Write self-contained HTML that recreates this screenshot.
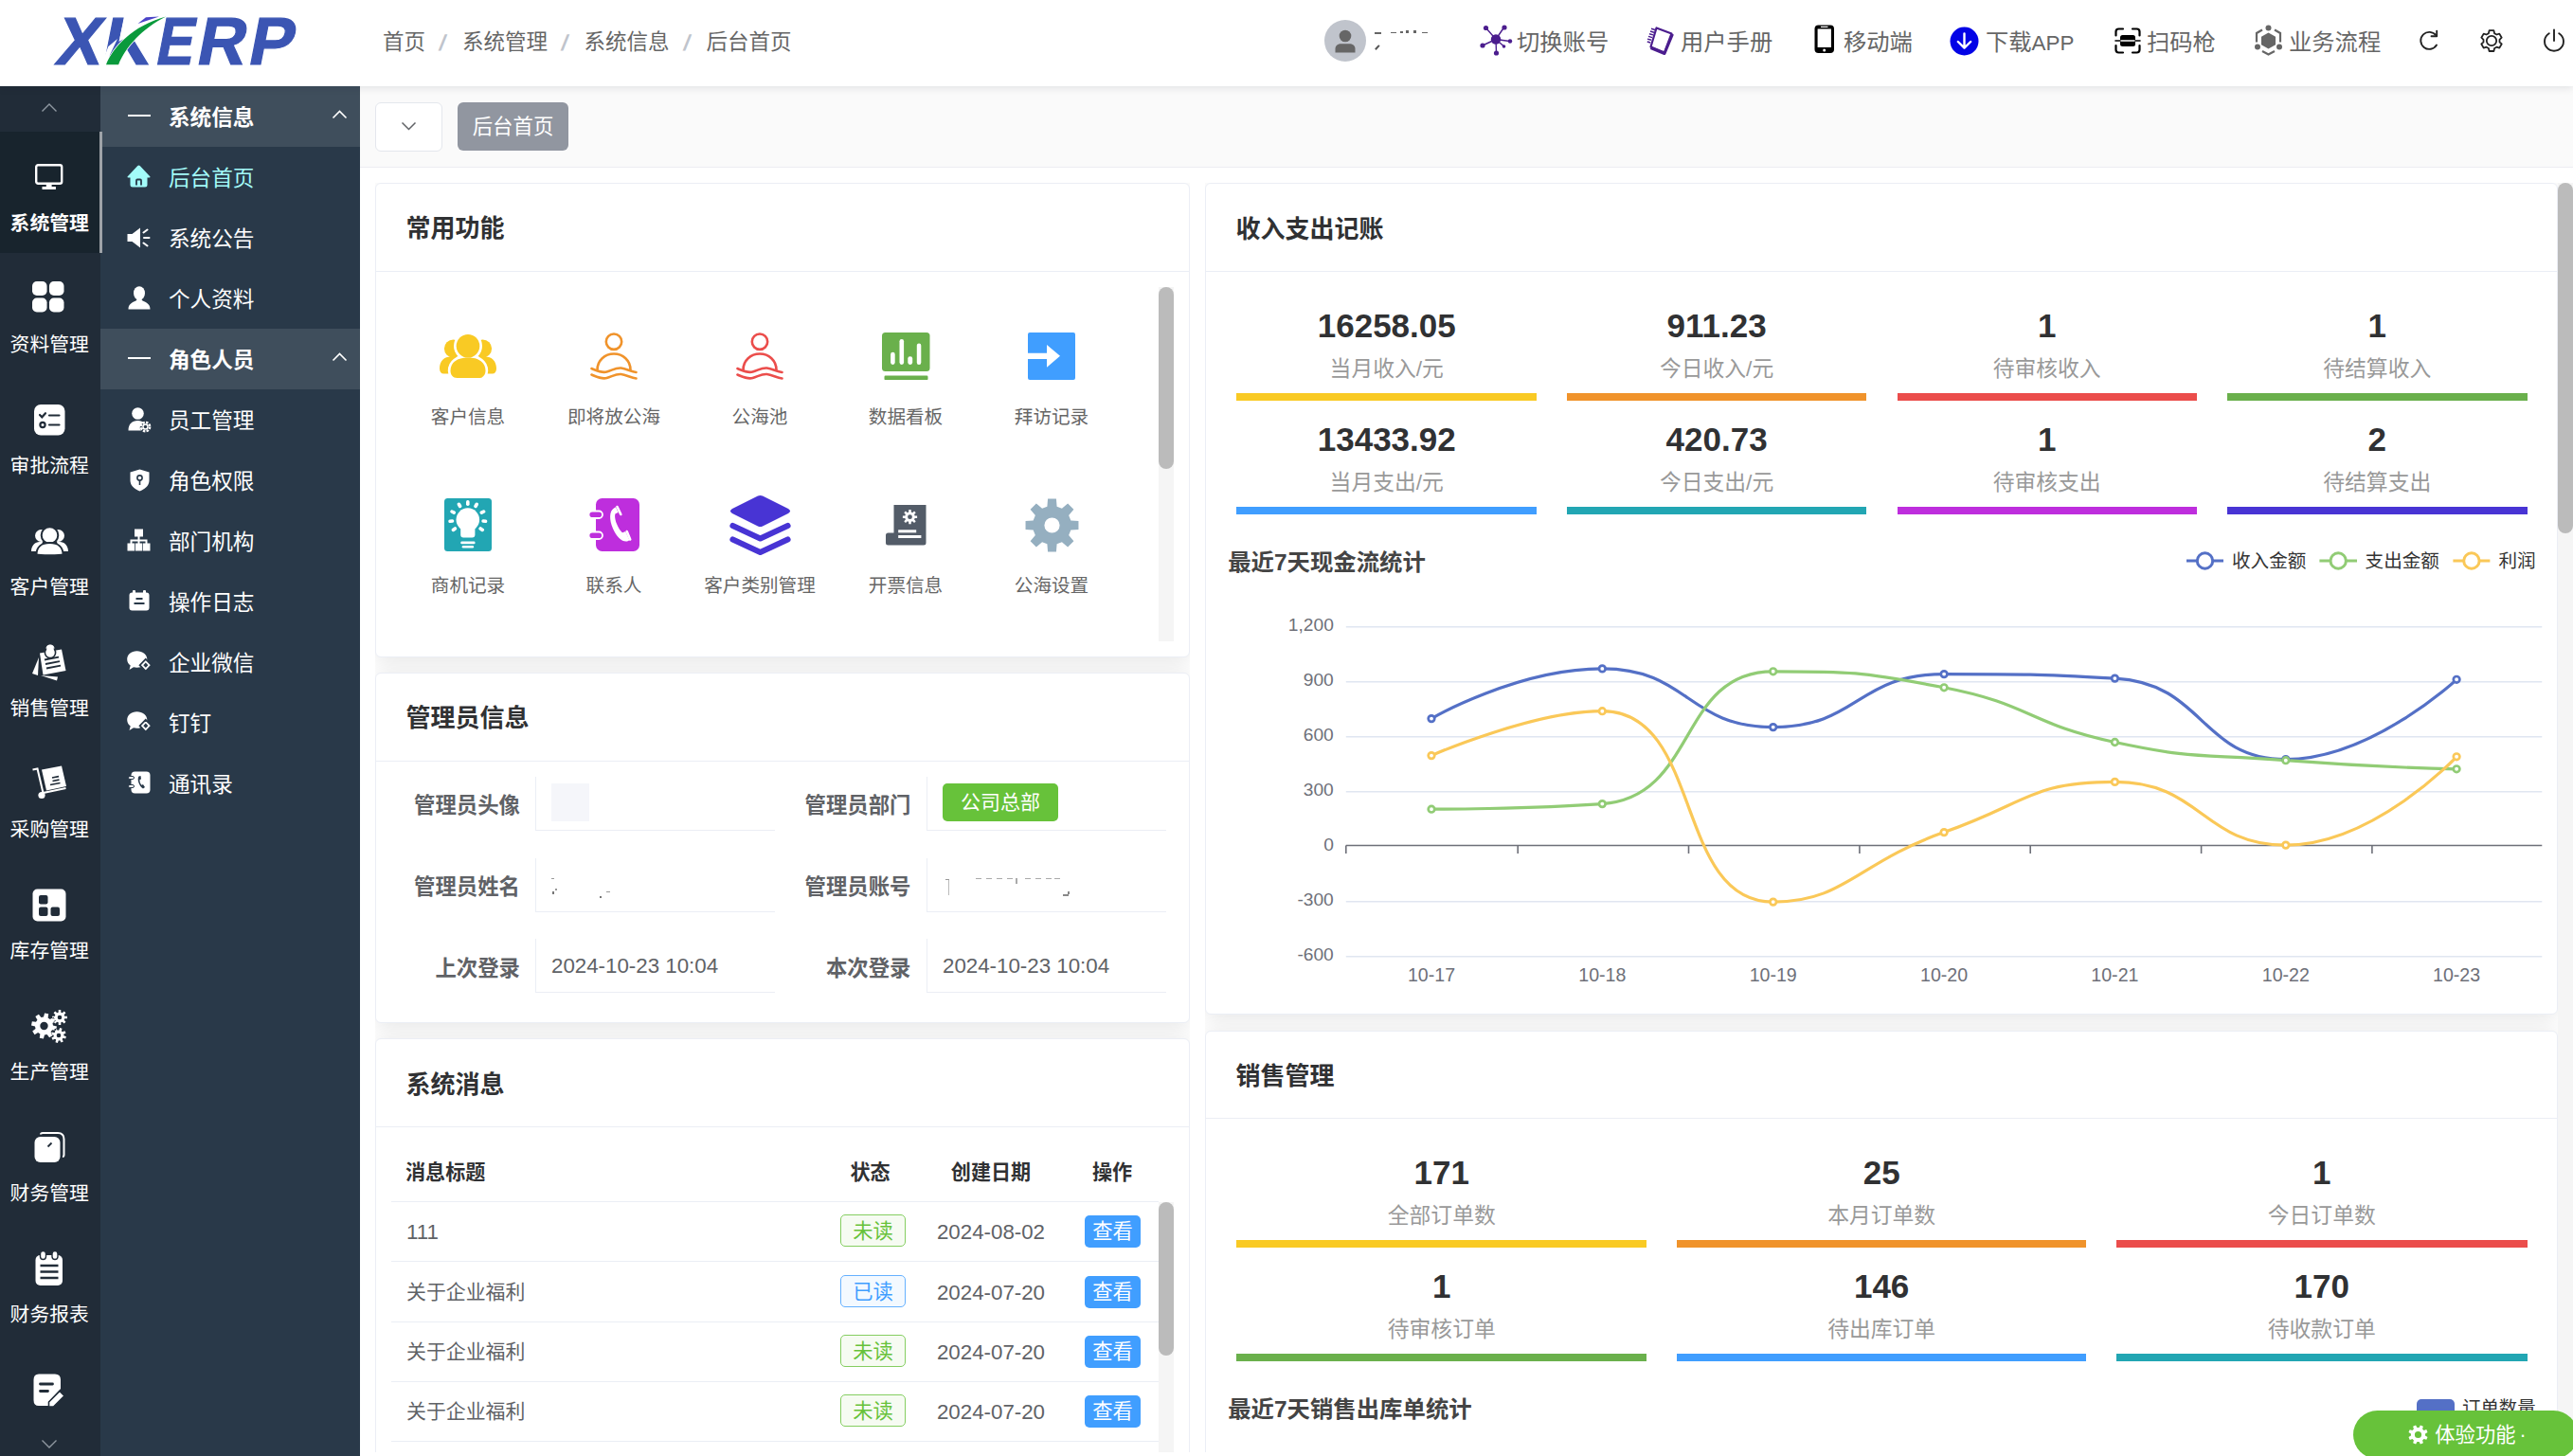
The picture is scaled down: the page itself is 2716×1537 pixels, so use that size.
<!DOCTYPE html>
<html lang="zh-CN">
<head>
<meta charset="utf-8">
<title>XKERP 后台首页</title>
<style>
*{box-sizing:border-box;margin:0;padding:0}
html,body{width:2716px;height:1537px;overflow:hidden;background:#fff}
body{font-family:"Liberation Sans","Noto Sans CJK SC",sans-serif;color:#333;position:relative}
.abs{position:absolute}
svg{display:block}
/* header */
#hd{position:absolute;left:0;top:0;width:2716px;height:91px;background:#fff;box-shadow:0 2px 8px rgba(0,21,41,.10);z-index:5}
.bc{position:absolute;top:0;height:91px;line-height:90px;font-size:22.5px;color:#666;white-space:nowrap}
.bc.sep{color:#c0c4cc;font-size:23px;font-weight:bold}
.hi{position:absolute;top:0;height:91px;line-height:89.4px;font-size:24.3px;color:#666;white-space:nowrap}
/* sidebars */
#s1{position:absolute;left:0;top:91px;width:106px;height:1446px;background:#212c38;z-index:2}
#s2{position:absolute;left:106px;top:91px;width:274px;height:1446px;background:#293949;z-index:1}
.s1i{position:absolute;left:0;width:106px;height:128px;color:#fff;text-align:center}
.s1i .lb{position:absolute;left:-10.8px;width:126px;text-align:center;top:80px;font-size:20.8px;line-height:34px;white-space:nowrap;color:#fff}
.s1i svg{position:absolute}
.s2h{position:absolute;left:0;width:274px;height:64px;background:#3f4e5c;color:#fff;font-weight:bold;font-size:22.6px;line-height:68.6px}
.s2i{position:absolute;left:0;width:274px;height:64px;color:#fff;font-size:22.6px;line-height:68.6px}
.s2h span,.s2i span{position:absolute;left:72px;top:0;white-space:nowrap}
.s2i svg,.s2h svg{position:absolute}
/* main */
#tabs{position:absolute;left:380px;top:91px;width:2336px;height:86px;background:#fafafa;border-bottom:1px solid #ececf2}
.card{position:absolute;background:#fff;border:1px solid #ebeef5;border-radius:6px;box-shadow:0 3.8px 22.8px rgba(0,0,0,.1)}
.ct{position:absolute;left:31.5px;font-weight:bold;font-size:26px;color:#303133;white-space:nowrap;line-height:40px}
.chl{position:absolute;left:0;right:0;height:1px;background:#ebeef5}

.fl{width:180px;text-align:center;font-size:19.6px;color:#666;line-height:30px;white-space:nowrap}
.al{text-align:right;font-weight:bold;font-size:22.4px;color:#606266;line-height:40px;white-space:nowrap}
.vb{height:57px;border-left:1px solid #ebeef5;border-bottom:1px solid #ebeef5}
.av{font-size:22.3px;color:#606266;line-height:40px;white-space:nowrap}
.th{font-weight:bold;font-size:21.1px;color:#303133;line-height:41.4px;white-space:nowrap}
.td{font-size:22.3px;color:#606266;line-height:41.4px;white-space:nowrap}
.tdc{font-size:20.9px;color:#606266;line-height:40px;white-space:nowrap}
.tag{width:69px;height:34px;border-radius:5px;font-size:21.3px;line-height:35.8px;text-align:center;border:1px solid}
.tg{background:#f6fbf2;border-color:#85ce61;color:#67c23a}
.tb{background:#f3f9ff;border-color:#66b1ff;color:#409eff}
.btn{width:59px;height:34px;border-radius:5px;background:#409eff;color:#fff;font-size:21.3px;line-height:35.4px;text-align:center}

.num{text-align:center;font-weight:bold;font-size:35px;color:#303133;line-height:50px;white-space:nowrap}
.nlb{text-align:center;font-size:22.8px;color:#999;line-height:40px;white-space:nowrap}
.cht{font-weight:bold;font-size:24.4px;color:#444;line-height:40px;white-space:nowrap}
</style>
</head>
<body>
<div id="hd">
<svg class="abs" style="left:50px;top:10px" width="280" height="70" viewBox="0 0 280 70">
<g font-family="Liberation Sans,sans-serif" font-weight="bold" font-size="71" fill="#3b55b3" stroke="#3b55b3" stroke-width="1.2"><text transform="translate(0,58.2) skewX(-11)" y="0"><tspan x="7">X</tspan><tspan x="55.5">K</tspan><tspan x="112.5" textLength="39.5" lengthAdjust="spacingAndGlyphs">E</tspan><tspan x="155.5">R</tspan><tspan x="210">P</tspan></text></g>
<path d="M56 61 L64.2 39.3 L74 31 L66 48 L63 61 Z" fill="#fff"/>
<path d="M82.2 5 L122 5 L122 8.600 L75.500 34 L77 27 Z" fill="#fff"/>
<path d="M95.5 15 L104 8.2 L118 7.6 Z" fill="#4b44c8"/>
<path d="M62 58.2 C69 40 90 17 125.1 7.4 C100 20 82 40 75.1 58.2 Z" fill="#0a9a3c" stroke="#fff" stroke-width="1.5"/>
<path d="M62 58.2 C69 40 90 17 125.1 7.4 C100 20 82 40 75.1 58.2 Z" fill="#0a9a3c"/>
</svg>
<div class="bc" style="left:404px">首页</div>
<div class="bc" style="left:488px">系统管理</div>
<div class="bc" style="left:616.5px">系统信息</div>
<div class="bc" style="left:745.5px">后台首页</div>
<div class="bc sep" style="left:463.5px;transform:skewX(-12deg)">/</div>
<div class="bc sep" style="left:592.5px;transform:skewX(-12deg)">/</div>
<div class="bc sep" style="left:721.5px;transform:skewX(-12deg)">/</div>
<div class="abs" style="left:1398px;top:21px;width:44px;height:44px;border-radius:50%;background:#c0c4cc"></div>
<svg class="abs" style="left:1408px;top:30px" width="24" height="26" viewBox="0 0 24 26"><circle cx="12" cy="8" r="6.3" fill="#666"/><path d="M1.5 25.5v-4c0-3.5 3-5.3 6-5.3h9c3 0 6 1.8 6 5.3v4z" fill="#666"/></svg>
<div class="abs" style="left:1451px;top:34px;width:7px;height:1.7px;background:#666"></div><div class="abs" style="left:1468px;top:34px;width:6px;height:1.2px;background:#666"></div><div class="abs" style="left:1478px;top:33px;width:2.5px;height:2px;background:#666"></div><div class="abs" style="left:1484px;top:32px;width:3px;height:3px;background:#666"></div><div class="abs" style="left:1492px;top:32px;width:3px;height:3px;background:#666"></div><div class="abs" style="left:1500.5px;top:34px;width:6.5px;height:1px;background:#666"></div><div class="abs" style="left:1451px;top:49px;width:6px;height:2.4px;background:#555;transform:rotate(-48deg);transform-origin:center"></div>
<svg class="abs" style="left:1562px;top:26px" width="35" height="33" viewBox="0 0 35 33" fill="#4b1d8e" stroke="#4b1d8e" stroke-width="1.4" stroke-linecap="round">
<circle cx="17" cy="15.5" r="5.2" stroke="none"/>
<path d="M17 15.5L7 4M17 15.5L25.5 3M17 15.5L31.5 17.5M17 15.5L3 22M17 15.5L17.5 30M17 15.5L25 22.5"/>
<circle cx="6.5" cy="3.5" r="2.6" stroke="none"/><circle cx="26" cy="3" r="2.6" stroke="none"/><circle cx="32" cy="17.5" r="2.2" stroke="none"/><circle cx="3" cy="22" r="2.6" stroke="none"/><circle cx="17.5" cy="30" r="2.6" stroke="none"/><circle cx="25.5" cy="23" r="1.8" stroke="none"/>
</svg>
<div class="hi" style="left:1601px">切换账号</div>
<svg class="abs" style="left:1738px;top:26px" width="30" height="33" viewBox="0 0 30 33">
<path d="M10.5 3.5L26.5 9.5L19 29.5L4.5 23.5Z" fill="#fff" stroke="#4b1d8e" stroke-width="2.2" stroke-linejoin="round"/>
<path d="M4.5 24.5L19 30.5L27.5 10" fill="none" stroke="#4b1d8e" stroke-width="3" stroke-linejoin="round"/>
<path d="M9 5.5l-4 -1.2M8 8.2l-4 -1.2M7 10.9l-4 -1.2M6 13.6l-4 -1.2M5 16.3l-4 -1.2M4.2 19l-3.4 -1" stroke="#4b1d8e" stroke-width="1.5"/>
</svg>
<div class="hi" style="left:1774px">用户手册</div>
<svg class="abs" style="left:1915px;top:26px" width="22" height="31" viewBox="0 0 22 31"><rect x="0.5" y="0.5" width="20.5" height="29.5" rx="4" fill="#000"/><rect x="3.6" y="4.5" width="14.3" height="19.5" fill="#fff"/><circle cx="10.7" cy="27" r="1.5" fill="#fff"/><rect x="7" y="1.8" width="7.5" height="1.2" fill="#fff"/></svg>
<div class="hi" style="left:1946px">移动端</div>
<svg class="abs" style="left:2058px;top:28px" width="31" height="31" viewBox="0 0 31 31"><circle cx="15.5" cy="15.5" r="15" fill="#0303e6"/><path d="M15.5 7.5v15M8.8 16l6.7 6.7l6.7-6.7" fill="none" stroke="#fff" stroke-width="2.4" stroke-linecap="round" stroke-linejoin="round"/></svg>
<div class="hi" style="left:2096px">下载<span style="font-size:22.4px">APP</span></div>
<svg class="abs" style="left:2232px;top:29px" width="28" height="28" viewBox="0 0 28 28" fill="none" stroke="#000" stroke-width="2.2" stroke-linecap="round">
<path d="M1.5 8.5V4.5Q1.5 1.5 4.5 1.5H9M19 1.5H23.5Q26.5 1.5 26.5 4.5V8.5M26.5 19V23.5Q26.5 26.5 23.5 26.5H19M9 26.5H4.5Q1.5 26.5 1.5 23.5V19"/>
<rect x="6" y="8" width="16" height="12" rx="2.5" fill="#000" stroke="none"/><path d="M1 14H27" stroke="#000" stroke-width="1.6"/><path d="M7 14H21" stroke="#fff" stroke-width="1.6"/>
</svg>
<div class="hi" style="left:2266px">扫码枪</div>
<svg class="abs" style="left:2379px;top:26px" width="31" height="33" viewBox="0 0 31 33" fill="#666">
<path d="M15.5 8.5L23 12.7V21.3L15.5 25.5L8 21.3V12.7Z"/>
<circle cx="15.5" cy="3.5" r="3"/><circle cx="4" cy="23.5" r="3"/><circle cx="27" cy="23.5" r="3"/>
<path d="M9 5.5L3 9V18.5M22 5.5L28 9V18.5M9 28L15.5 31.5L22 28" fill="none" stroke="#666" stroke-width="2.2"/>
</svg>
<div class="hi" style="left:2416px">业务流程</div>
<svg class="abs" style="left:2552px;top:31px" width="25" height="24" viewBox="0 0 25 24" fill="none" stroke="#222" stroke-width="1.9" stroke-linecap="round" stroke-linejoin="round"><path d="M20 16.5A9 9 0 1 1 19.5 6.5"/><path d="M14.5 7.2H20.2V1.6"/></svg>
<svg class="abs" style="left:2617px;top:30px" width="26" height="26" viewBox="0 0 26 26" fill="none" stroke="#222" stroke-width="1.8" stroke-linejoin="round"><circle cx="13" cy="13" r="5.2"/><path d="M10.6 2.2h4.8l.7 3 2.3 1.3 2.9-.9 2.4 4.1-2.2 2.1v2.6l2.2 2.1-2.4 4.1-2.9-.9-2.3 1.3-.7 3h-4.8l-.7-3-2.3-1.3-2.9.9-2.4-4.1 2.2-2.1v-2.6L2.3 9.7l2.4-4.1 2.9.9 2.3-1.3z"/></svg>
<svg class="abs" style="left:2684px;top:30px" width="24" height="26" viewBox="0 0 24 26" fill="none" stroke="#222" stroke-width="1.9" stroke-linecap="round"><path d="M12 1.5V13"/><path d="M6.8 5.2A10 10 0 1 0 17.2 5.2"/></svg>
</div>
<div id="s1">
<svg class="abs" style="left:43px;top:17px" width="18" height="11" viewBox="0 0 18 11"><path d="M1.5 9.5L9 2L16.5 9.5" fill="none" stroke="#8f98a1" stroke-width="1.4"/></svg>
<div class="abs" style="left:0;top:48px;width:106px;height:128px;background:#18242d"></div>
<div class="abs" style="left:105px;top:48px;width:3px;height:128px;background:#9ea3a8;z-index:3"></div>
<div class="s1i" style="top:48px"><svg style="left:37px;top:34px" width="30" height="28" viewBox="0 0 30 28"><rect x="1.2" y="1.2" width="27" height="19.6" rx="2" fill="none" stroke="#fff" stroke-width="2.4"/><path d="M11.8 21h5.8v3.2h-5.8zM7.500 24h14.400v3H7.500z" fill="#fff"/></svg><div class="lb" style="font-weight:bold;">系统管理</div></div>
<div class="s1i" style="top:176px"><svg style="left:34px;top:30px" width="34" height="33" viewBox="0 0 35 34" fill="#fff"><rect x="0" y="0" width="16" height="15.5" rx="5"/><rect x="18.5" y="0" width="16" height="15.5" rx="5"/><rect x="0" y="18" width="16" height="15.5" rx="5"/><rect x="18.5" y="18" width="16" height="15.5" rx="5"/></svg><div class="lb" style="">资料管理</div></div>
<div class="s1i" style="top:304px"><svg style="left:36px;top:32px" width="33" height="33" viewBox="0 0 33 33"><rect x="0" y="0" width="32.5" height="32.5" rx="7" fill="#fff"/><g fill="none" stroke="#212c38" stroke-width="2.2" stroke-linecap="round"><path d="M6 11l2.3 2.3L12 9.2M16 11.5h10.5M16 21.5h10.5"/><circle cx="9" cy="21.5" r="2.6"/></g></svg><div class="lb" style="">审批流程</div></div>
<div class="s1i" style="top:432px"><svg style="left:33px;top:33px" width="39" height="30" viewBox="0 0 39 30" fill="#fff"><circle cx="10.5" cy="9.5" r="6.5"/><circle cx="28.5" cy="9.5" r="6.5"/><path d="M0 26c0-6 4-10 9-10h3l-3 10zM39 26c0-6-4-10-9-10h-3l3 10z"/><circle cx="19.5" cy="9" r="8.8" stroke="#212c38" stroke-width="2"/><path d="M5.5 29.5c0-8 5.5-12.5 14-12.5s14 4.500 14 12.500c-3 1-25 1-28 0z" stroke="#212c38" stroke-width="2"/></svg><div class="lb" style="">客户管理</div></div>
<div class="s1i" style="top:560px"><svg style="left:34px;top:29px" width="36" height="39" viewBox="0 0 36 39" fill="#fff"><path d="M7 14L0 31l6 2z"/><path d="M9 33l17 5.500l1-4z"/><path d="M8 9.500L31 5.500L35.500 28L11.500 32.500z"/><circle cx="19" cy="5" r="4.600"/><circle cx="19" cy="9" r="5.600" fill="#fff" stroke="#212c38" stroke-width="1.6"/><circle cx="19" cy="4.600" r="3.800"/><g stroke="#212c38" stroke-width="1.800"><path d="M13 16.500l15-2.800M14 21l15-2.800M15 25.500l15-2.800"/></g></svg><div class="lb" style="">销售管理</div></div>
<div class="s1i" style="top:688px"><svg style="left:34px;top:29px" width="37" height="36" viewBox="0 0 37 36" fill="#fff"><path d="M10 4.500L31 0.500L36 22L15 26.500z"/><path d="M0.500 4.500L5.500 3.500L11.500 29L35.500 24" fill="none" stroke="#fff" stroke-width="2"/><circle cx="10" cy="31.500" r="3.600"/><g stroke="#212c38" stroke-width="1.700"><path d="M21 13l7-1.400M21.500 16.500l7-1.400M19 20.500l10.500-2"/></g></svg><div class="lb" style="">采购管理</div></div>
<div class="s1i" style="top:816px"><svg style="left:34px;top:31px" width="36" height="35" viewBox="0 0 36 35"><rect x="0.500" y="0.500" width="35" height="34" rx="5" fill="#fff"/><g fill="#212c38"><rect x="7" y="7" width="9.500" height="9.500" rx="2"/><rect x="7" y="19.500" width="9.500" height="9.500" rx="2"/><rect x="19.500" y="19.500" width="9.500" height="9.500" rx="2"/></g></svg><div class="lb" style="">库存管理</div></div>
<div class="s1i" style="top:944px"><svg style="left:33px;top:30.5px" width="39" height="36" viewBox="0 0 39 36"><path d="M22.99 16.51L26.99 17.58L26.15 21.72L22.05 21.14L20.55 23.36L22.63 26.95L19.11 29.28L16.61 25.97L13.99 26.49L12.92 30.49L8.78 29.65L9.36 25.55L7.14 24.05L3.55 26.13L1.22 22.61L4.53 20.11L4.01 17.49L0.01 16.42L0.85 12.28L4.95 12.86L6.45 10.64L4.37 7.05L7.89 4.72L10.39 8.03L13.01 7.51L14.08 3.51L18.22 4.35L17.64 8.45L19.86 9.95L23.45 7.87L25.78 11.39L22.47 13.89ZM17.70 17.00A4.2 4.2 0 1 0 9.30 17.00A4.2 4.2 0 1 0 17.70 17.00ZM35.23 6.66L37.90 6.75L37.90 9.25L35.23 9.34L34.65 10.75L36.47 12.70L34.70 14.47L32.75 12.65L31.34 13.23L31.25 15.90L28.75 15.90L28.66 13.23L27.25 12.65L25.30 14.47L23.53 12.70L25.35 10.75L24.77 9.34L22.10 9.25L22.10 6.75L24.77 6.66L25.35 5.25L23.53 3.30L25.30 1.53L27.25 3.35L28.66 2.77L28.75 0.10L31.25 0.10L31.34 2.77L32.75 3.35L34.70 1.53L36.47 3.30L34.65 5.25ZM32.30 8.00A2.3 2.3 0 1 0 27.70 8.00A2.3 2.3 0 1 0 32.30 8.00ZM34.39 27.26L36.92 28.14L36.18 30.53L33.60 29.83L32.63 31.00L33.79 33.40L31.58 34.57L30.25 32.25L28.74 32.39L27.86 34.92L25.47 34.18L26.17 31.60L25.00 30.63L22.60 31.79L21.43 29.58L23.75 28.25L23.61 26.74L21.08 25.86L21.82 23.47L24.40 24.17L25.37 23.00L24.21 20.60L26.42 19.43L27.75 21.75L29.26 21.61L30.14 19.08L32.53 19.82L31.83 22.40L33.00 23.37L35.40 22.21L36.57 24.42L34.25 25.75ZM31.30 27.00A2.3 2.3 0 1 0 26.70 27.00A2.3 2.3 0 1 0 31.30 27.00Z" fill="#fff" fill-rule="evenodd"/></svg><div class="lb" style="">生产管理</div></div>
<div class="s1i" style="top:1072px"><svg style="left:36px;top:32px" width="33" height="33" viewBox="0 0 33 33"><path d="M7 2.500Q7 1 9 1H25Q31.500 1 31.500 7.500V24Q31.500 26 30 26" fill="none" stroke="#fff" stroke-width="2"/><rect x="0.500" y="5" width="27" height="27" rx="6" fill="#fff"/><path d="M14.500 15.500l4-4" stroke="#212c38" stroke-width="1.800"/></svg><div class="lb" style="">财务管理</div></div>
<div class="s1i" style="top:1200px"><svg style="left:37px;top:29px" width="30" height="38" viewBox="0 0 30 38"><rect x="0.500" y="5" width="28.500" height="32" rx="5" fill="#fff"/><rect x="5.500" y="0.500" width="6" height="9" rx="3" fill="#fff" stroke="#212c38" stroke-width="1.400"/><rect x="18" y="0.500" width="6" height="9" rx="3" fill="#fff" stroke="#212c38" stroke-width="1.400"/><g stroke="#212c38" stroke-width="2.600"><path d="M5.500 16h19M5.500 22.500h19M5.500 29h19"/></g></svg><div class="lb" style="">财务报表</div></div>
<div class="s1i" style="top:1328px"><svg style="left:35px;top:31px" width="35" height="35" viewBox="0 0 35 35"><path d="M6 0.500H23Q29 0.500 29 6.500V16L16 30v4H6Q0.500 34 0.500 28V6.500Q0.500 0.500 6 0.500z" fill="#fff"/><g stroke="#212c38" stroke-width="2.800" stroke-linecap="round"><path d="M7.500 11h13M7.500 18.500h8"/></g><path d="M28 18.500l5 5L21.500 35H16.500V30z" fill="#fff" stroke="#212c38" stroke-width="1.600"/></svg></div>
<div class="abs" style="left:0;top:1410px;width:106px;height:36px;background:#212c38"></div>
<svg class="abs" style="left:43px;top:1428px" width="18" height="11" viewBox="0 0 18 11"><path d="M1.5 1.5L9 9L16.5 1.5" fill="none" stroke="#8f98a1" stroke-width="1.4"/></svg>
</div>
<div id="s2">
<div class="s2h" style="top:0px"><div class="abs" style="left:29px;top:30px;width:24px;height:2px;background:#fff"></div><span>系统信息</span><svg style="left:244px;top:25px" width="17" height="10" viewBox="0 0 17 10"><path d="M1.5 8.5L8.5 1.5L15.5 8.500" fill="none" stroke="#fff" stroke-width="1.600"/></svg></div>
<div class="s2i" style="top:64px;color:#a3fbf9"><svg style="left:28px;top:19px" width="25" height="24" viewBox="0 0 25 24"><path d="M11.300 1Q12.500 0 13.700 1L24.500 12.500Q24.800 13.500 23.500 13.500H21.500V21Q21.500 23.500 19 23.500H6Q3.500 23.500 3.500 21V13.500H1.500Q0.200 13.500 0.500 12.500z" fill="#a3fbf9"/><path d="M10 21.500v-5Q10 15.500 11 15.500h3Q15 15.500 15 16.500v5" fill="none" stroke="#293949" stroke-width="1.800"/></svg><span>后台首页</span></div>
<div class="s2i" style="top:128px;color:#fff"><svg style="left:28px;top:21px" width="25" height="22" viewBox="0 0 25 22" fill="#fff"><path d="M0.500 7h5L14 0.500v21L5.500 15h-5z"/><g stroke="#fff" stroke-width="2" stroke-linecap="round"><path d="M18 11h5.500M17.500 5.500l4-3M17.500 16.500l4 3"/></g></svg><span>系统公告</span></div>
<div class="s2i" style="top:192px;color:#fff"><svg style="left:29px;top:19px" width="24" height="25" viewBox="0 0 24 25" fill="#fff"><ellipse cx="12" cy="7.500" rx="6" ry="7.300"/><path d="M0.500 24.500c0-5 3-7 8-9l1.500-2h4l1.500 2c5 2 8 4 8 9z"/></svg><span>个人资料</span></div>
<div class="s2h" style="top:256px"><div class="abs" style="left:29px;top:30px;width:24px;height:2px;background:#fff"></div><span>角色人员</span><svg style="left:244px;top:25px" width="17" height="10" viewBox="0 0 17 10"><path d="M1.5 8.5L8.5 1.5L15.5 8.500" fill="none" stroke="#fff" stroke-width="1.600"/></svg></div>
<div class="s2i" style="top:320px;color:#fff"><svg style="left:29px;top:19px" width="25" height="27" viewBox="0 0 25 27" fill="#fff"><circle cx="10.500" cy="6.500" r="6.300"/><path d="M0.500 24.500c0-7 4-10.500 10-10.500c3 0 5 1 6.500 2.500c-4 1-5.500 5-3 8z"/><circle cx="18.500" cy="20.500" r="4.600" fill="none" stroke="#fff" stroke-width="2.600" stroke-dasharray="2.400 1.200"/><circle cx="18.500" cy="20.500" r="3.200" fill="#fff"/><circle cx="18.500" cy="20.500" r="1.700" fill="#293949"/></svg><span>员工管理</span></div>
<div class="s2i" style="top:384px;color:#fff"><svg style="left:31px;top:20px" width="21" height="24" viewBox="0 0 21 24"><path d="M10.500 0.500L20.500 3.500V12c0 6-5 9.500-10 11.500C5.500 21.500 0.500 18 0.500 12V3.500z" fill="#fff"/><circle cx="10.500" cy="9.500" r="2.600" fill="none" stroke="#293949" stroke-width="1.600"/><path d="M10.500 12v5" stroke="#293949" stroke-width="1.600"/></svg><span>角色权限</span></div>
<div class="s2i" style="top:448px;color:#fff"><svg style="left:28px;top:19px" width="25" height="24" viewBox="0 0 25 24" fill="#fff"><rect x="8" y="0.500" width="9" height="8"/><path d="M11.500 8h2v4h-2zM3.500 11.500h18v2h-18zM3.500 11.500h2v5h-2zM19.500 11.500h2v5h-2zM11.500 12h2v4h-2z"/><rect x="0.500" y="15.500" width="7.500" height="8"/><rect x="8.800" y="15.500" width="7.500" height="8"/><rect x="17" y="15.500" width="7.500" height="8"/></svg><span>部门机构</span></div>
<div class="s2i" style="top:512px;color:#fff"><svg style="left:30px;top:20px" width="22" height="22" viewBox="0 0 22 22"><rect x="0.500" y="2.500" width="21" height="19" rx="3" fill="#fff"/><rect x="4" y="0" width="3" height="5" rx="1" fill="#fff"/><rect x="15" y="0" width="3" height="5" rx="1" fill="#fff"/><path d="M7.500 9h7M5.500 14h11" stroke="#293949" stroke-width="1.800"/></svg><span>操作日志</span></div>
<div class="s2i" style="top:576px;color:#fff"><svg style="left:28px;top:19.500px" width="27" height="23" viewBox="0 0 27 23"><path d="M10.500 0.200C16.500 0.200 21.300 4 21.300 9S16.500 17.800 10.500 17.800c-1.200 0-2.400-.2-3.500-.5L2.500 20l1.200-4.500C1.500 14 .2 11.700.2 9 .2 4 4.500.2 10.500.2z" fill="#fff"/><path d="M19.800 8.800l6.200 6.400-6.200 6.400-6.200-6.400z" fill="#fff" stroke="#293949" stroke-width="1.800"/><path d="M19.800 12.600l2.500 2.600-2.500 2.600-2.500-2.600z" fill="#293949"/></svg><span>企业微信</span></div>
<div class="s2i" style="top:640px;color:#fff"><svg style="left:28px;top:19.500px" width="27" height="23" viewBox="0 0 27 23"><path d="M10.500 0.200C16.500 0.200 21.300 4 21.300 9S16.500 17.800 10.500 17.800c-1.200 0-2.400-.2-3.500-.5L2.500 20l1.200-4.500C1.500 14 .2 11.700.2 9 .2 4 4.500.2 10.500.2z" fill="#fff"/><path d="M19.800 8.800l6.200 6.400-6.200 6.400-6.200-6.400z" fill="#fff" stroke="#293949" stroke-width="1.800"/><path d="M19.800 12.600l2.500 2.600-2.500 2.600-2.500-2.600z" fill="#293949"/></svg><span>钉钉</span></div>
<div class="s2i" style="top:704px;color:#fff"><svg style="left:29px;top:19px" width="24" height="24" viewBox="0 0 24 24"><rect x="3.500" y="0.500" width="20" height="23" rx="4" fill="#fff"/><rect x="0.500" y="5.500" width="6" height="3" rx="1.500" fill="#fff" stroke="#293949" stroke-width="1"/><rect x="0.500" y="14.500" width="6" height="3" rx="1.500" fill="#fff" stroke="#293949" stroke-width="1"/><path d="M11.500 5.500c-2 3 0 10 4.500 13l2-1.500-2-3-1.500.8c-1.500-1.500-2.300-4-2-5.800l1.500-.500-.5-3.500z" fill="#293949"/></svg><span>通讯录</span></div>
</div>
<div id="tabs">
<div class="abs" style="left:16px;top:17px;width:71px;height:52px;background:#fff;border:1px solid #e4e7ed;border-radius:6px"></div>
<svg class="abs" style="left:43px;top:37px" width="17" height="10" viewBox="0 0 17 10"><path d="M1.500 1.500L8.500 8.500L15.500 1.500" fill="none" stroke="#606266" stroke-width="1.500"/></svg>
<div class="abs" style="left:103px;top:17px;width:117px;height:51px;background:#9196a0;border-radius:6px;color:#fff;font-size:21.4px;line-height:53px;text-align:center">后台首页</div>
</div>
<div id="main">
<div class="abs" style="left:396px;top:193px;width:860px;height:1340px;overflow:hidden"><div class="abs" style="left:-396px;top:-193px;width:0;height:0">
<div class="card" style="left:396px;top:193px;width:860px;height:501px">
<div class="ct" style="top:26.9px">常用功能</div><div class="chl" style="top:92px"></div>
<svg class="abs" style="left:67.0px;top:159.0px" width="60" height="46" viewBox="0 0 60 46"><g fill="#f9ca24"><circle cx="14.500" cy="15" r="9.600"/><circle cx="45.500" cy="15" r="9.600"/><path d="M0 36c0-8 5-12.500 12-12.500h6v18H4.500C1.500 41.500 0 39.500 0 36zM60 36c0-8-5-12.500-12-12.500h-6v18h13.500c3 0 4.500-2 4.500-5.500z"/><circle cx="30" cy="12.300" r="12.300" stroke="#fff" stroke-width="5.400"/><path d="M11.500 38.500c0-9 7-14 18.500-14s18.500 5 18.500 14c0 4-2.500 7.500-7 7.500h-23c-4.500 0-7-3.500-7-7.500z" stroke="#fff" stroke-width="5.400"/><circle cx="30" cy="12.300" r="12.300"/><path d="M11.500 38.500c0-9 7-14 18.500-14s18.500 5 18.500 14c0 4-2.500 7.500-7 7.500h-23c-4.500 0-7-3.500-7-7.500z"/></g></svg>
<div class="abs fl" style="left:7px;top:230.8px">客户信息</div>
<svg class="abs" style="left:226.0px;top:156.5px" width="50" height="51" viewBox="0 0 50 51"><g fill="none" stroke="#f0932b" stroke-width="2.600" stroke-linecap="round"><circle cx="25" cy="9.700" r="8.200"/><path d="M7.500 39.500c0-10 8-17 17.500-17s17.500 7 17.500 17"/><path d="M1.500 38c6 2.500 10.500 5 16 3.500s9.500-4.500 15-4s10.500 4 16 4.500"/><path d="M1.500 44.500c6 2.500 10.500 5 16 3.500s9.500-4.500 15-4s10.500 4 16 4.500"/></g></svg>
<div class="abs fl" style="left:161px;top:230.8px">即将放公海</div>
<svg class="abs" style="left:380.0px;top:156.5px" width="50" height="51" viewBox="0 0 50 51"><g fill="none" stroke="#eb4d4b" stroke-width="2.600" stroke-linecap="round"><circle cx="25" cy="9.700" r="8.200"/><path d="M7.500 39.500c0-10 8-17 17.500-17s17.500 7 17.500 17"/><path d="M1.500 38c6 2.500 10.500 5 16 3.500s9.500-4.500 15-4s10.500 4 16 4.500"/><path d="M1.500 44.500c6 2.500 10.500 5 16 3.500s9.500-4.500 15-4s10.500 4 16 4.500"/></g></svg>
<div class="abs fl" style="left:315px;top:230.8px">公海池</div>
<svg class="abs" style="left:533.5px;top:157.0px" width="51" height="50" viewBox="0 0 51 50"><rect x="0" y="0" width="50.500" height="41" rx="3.500" fill="#6ab04c"/><rect x="2.500" y="45.500" width="46" height="4.600" rx="1.200" fill="#6ab04c"/><g fill="#fff"><rect x="9.100" y="20.700" width="4.600" height="13.200" rx="2.300"/><rect x="18.500" y="7" width="4.600" height="26.900" rx="2.300"/><rect x="27.300" y="25.200" width="4.900" height="8.700" rx="2.400"/><rect x="36.800" y="11.500" width="4.500" height="22.400" rx="2.200"/></g></svg>
<div class="abs fl" style="left:469px;top:230.8px">数据看板</div>
<svg class="abs" style="left:688.0px;top:157.0px" width="50" height="50" viewBox="0 0 50 50"><rect x="0" y="0" width="50" height="50" rx="2" fill="#409eff"/><path d="M0 21.700H20V13L34 24.800L20 36.800V28H0z" fill="#fff"/></svg>
<div class="abs fl" style="left:623px;top:230.8px">拜访记录</div>
<svg class="abs" style="left:72.0px;top:332.0px" width="50" height="56" viewBox="0 0 50 56"><rect x="0" y="0" width="50" height="56" rx="3.500" fill="#22a6b3"/><g fill="#fff"><circle cx="24.800" cy="22.600" r="12.300"/><path d="M17.200 28h15.200v10.500q0 3-3 3h-9.200q-3 0-3-3z"/><rect x="17.200" y="45.500" width="15.400" height="2.800" rx="1.400"/><rect x="18.700" y="50" width="12.400" height="2.400" rx="1.200"/><rect x="21.80" y="3.20" width="6.000" height="3.600" rx="1.700" transform="rotate(-90 24.80 5.00)"/><rect x="30.60" y="5.56" width="6.000" height="3.600" rx="1.700" transform="rotate(-60 33.60 7.36)"/><rect x="13.00" y="5.56" width="6.000" height="3.600" rx="1.700" transform="rotate(-120 16.00 7.36)"/><rect x="37.48" y="12.81" width="6.000" height="3.600" rx="1.700" transform="rotate(-27 40.48 14.61)"/><rect x="6.12" y="12.81" width="6.000" height="3.600" rx="1.700" transform="rotate(-153 9.12 14.61)"/><rect x="39.33" y="22.33" width="6.000" height="3.600" rx="1.700" transform="rotate(5 42.33 24.13)"/><rect x="4.27" y="22.33" width="6.000" height="3.600" rx="1.700" transform="rotate(175 7.27 24.13)"/><rect x="36.22" y="30.89" width="6.000" height="3.600" rx="1.700" transform="rotate(35 39.22 32.69)"/><rect x="7.38" y="30.89" width="6.000" height="3.600" rx="1.700" transform="rotate(145 10.38 32.69)"/></g></svg>
<div class="abs fl" style="left:7px;top:408.8px">商机记录</div>
<svg class="abs" style="left:224.5px;top:332.0px" width="53" height="56" viewBox="0 0 53 56"><rect x="7" y="0" width="46" height="56" rx="6.500" fill="#be2edd"/><g fill="#be2edd" stroke="#fff" stroke-width="1.800"><rect x="-0.500" y="13.500" width="14.500" height="7.500" rx="3.700"/><rect x="-0.500" y="35.500" width="14.500" height="7.500" rx="3.700"/></g><path d="M26 10.500c-5 3-5 12.500-1 21.500s10 14.500 15 13.500l2.500-1.200-4.300-9.300-3 1.300c-2-1-5-6-6.300-9.500s-2.500-8.500-1.300-10.500l3-1.300-2.600-5.700z" fill="#fff"/><path d="M29.500 9l3.800 8M39.700 35l3.500 8.500" stroke="#fff" stroke-width="2.600" stroke-linecap="round"/></svg>
<div class="abs fl" style="left:161px;top:408.8px">联系人</div>
<svg class="abs" style="left:372.5px;top:327.5px" width="65" height="65" viewBox="0 0 65 65"><path d="M30 1.500q2.500-1.200 5 0l27 13.500q4 2.500 0 5l-27 13.500q-2.500 1.200-5 0l-27-13.500q-4-2.500 0-5z" fill="#4834d4"/><g fill="none" stroke="#4834d4" stroke-width="6.200" stroke-linecap="round" stroke-linejoin="round"><path d="M3.500 33l29 13.500l29-13.500"/><path d="M3.500 47.500l29 13.500l29-13.500"/></g></svg>
<div class="abs fl" style="left:315px;top:408.8px">客户类别管理</div>
<svg class="abs" style="left:537.5px;top:338.5px" width="43" height="43" viewBox="0 0 43 43"><path d="M8.500 0H42.500V40q0 2.500-2.500 2.500H2.500Q0 42.500 0 40V32q0-2.500 2.500-2.500H8.500z" fill="#535c68"/><path d="M30.63 11.38L33.11 11.50L33.11 13.90L30.63 14.02L30.06 15.40L31.73 17.23L30.03 18.93L28.20 17.26L26.82 17.83L26.70 20.31L24.30 20.31L24.18 17.83L22.80 17.26L20.97 18.93L19.27 17.23L20.94 15.40L20.37 14.02L17.89 13.90L17.89 11.50L20.37 11.38L20.94 10.00L19.27 8.17L20.97 6.47L22.80 8.14L24.18 7.57L24.30 5.09L26.70 5.09L26.82 7.57L28.20 8.14L30.03 6.47L31.73 8.17L30.06 10.00ZM27.90 12.70A2.4 2.4 0 1 0 23.10 12.70A2.4 2.4 0 1 0 27.90 12.70Z" fill="#fff" fill-rule="evenodd"/><rect x="13.200" y="26.300" width="19" height="3" fill="#fff"/><rect x="13.200" y="32" width="24.200" height="3" fill="#fff"/></svg>
<div class="abs fl" style="left:469px;top:408.8px">开票信息</div>
<svg class="abs" style="left:684.5px;top:331.5px" width="57" height="57" viewBox="0 0 57 57"><path d="M48.36 23.40L56.45 24.07L56.45 32.93L48.36 33.60L46.15 38.94L51.40 45.13L45.13 51.40L38.94 46.15L33.60 48.36L32.93 56.45L24.07 56.45L23.40 48.36L18.06 46.15L11.87 51.40L5.60 45.13L10.85 38.94L8.64 33.60L0.55 32.93L0.55 24.07L8.64 23.40L10.85 18.06L5.60 11.87L11.87 5.60L18.06 10.85L23.40 8.64L24.07 0.55L32.93 0.55L33.60 8.64L38.94 10.85L45.13 5.60L51.40 11.87L46.15 18.06ZM36.60 28.50A8.1 8.1 0 1 0 20.40 28.50A8.1 8.1 0 1 0 36.60 28.50Z" fill="#95afc0" fill-rule="evenodd"/></svg>
<div class="abs fl" style="left:623px;top:408.8px">公海设置</div>
<div class="abs" style="left:826px;top:109px;width:16px;height:374px;background:#f5f5f5"></div>
<div class="abs" style="left:826px;top:109px;width:16px;height:192px;background:#bbb;border-radius:8px"></div>
</div>
<div class="card" style="left:396px;top:710.4px;width:860px;height:369.4px">
<div class="ct" style="top:27px">管理员信息</div><div class="chl" style="top:92px"></div>
<div class="abs al" style="left:0;width:152px;top:119.90000000000002px">管理员头像</div>
<div class="abs al" style="left:400px;width:164.5px;top:119.90000000000002px">管理员部门</div>
<div class="abs vb" style="left:168px;top:108.60000000000002px;width:253px"></div>
<div class="abs vb" style="left:581px;top:108.60000000000002px;width:253px"></div>
<div class="abs al" style="left:0;width:152px;top:205.90000000000003px">管理员姓名</div>
<div class="abs al" style="left:400px;width:164.5px;top:205.90000000000003px">管理员账号</div>
<div class="abs vb" style="left:168px;top:194.60000000000002px;width:253px"></div>
<div class="abs vb" style="left:581px;top:194.60000000000002px;width:253px"></div>
<div class="abs al" style="left:0;width:152px;top:291.40000000000003px">上次登录</div>
<div class="abs al" style="left:400px;width:164.5px;top:291.40000000000003px">本次登录</div>
<div class="abs vb" style="left:168px;top:280.1px;width:253px"></div>
<div class="abs vb" style="left:581px;top:280.1px;width:253px"></div>
<div class="abs av" style="left:185px;top:288.90000000000003px">2024-10-23 10:04</div>
<div class="abs av" style="left:598px;top:288.90000000000003px">2024-10-23 10:04</div>
<div class="abs" style="left:185.0px;top:215.6px;width:3px;height:1.5px;background:#999"></div><div class="abs" style="left:186.0px;top:229.6px;width:1.5px;height:3px;background:#777"></div><div class="abs" style="left:189.0px;top:226.6px;width:1.5px;height:2px;background:#999"></div><div class="abs" style="left:236.0px;top:234.6px;width:1.5px;height:2.5px;background:#777"></div><div class="abs" style="left:243.0px;top:229.6px;width:4px;height:1.2px;background:#999"></div><div class="abs" style="left:601.0px;top:216.6px;width:3.5px;height:1.5px;background:#999"></div><div class="abs" style="left:603.5px;top:217.6px;width:1.6px;height:16px;background:#bbb"></div><div class="abs" style="left:633.0px;top:215.6px;width:6px;height:1.3px;background:#aaa"></div><div class="abs" style="left:644.0px;top:215.6px;width:6px;height:1.3px;background:#aaa"></div><div class="abs" style="left:655.0px;top:215.6px;width:6px;height:1.3px;background:#aaa"></div><div class="abs" style="left:666.0px;top:215.6px;width:6px;height:1.3px;background:#aaa"></div><div class="abs" style="left:685.0px;top:215.6px;width:6px;height:1.3px;background:#aaa"></div><div class="abs" style="left:696.0px;top:215.6px;width:6px;height:1.3px;background:#aaa"></div><div class="abs" style="left:707.0px;top:215.6px;width:6px;height:1.3px;background:#aaa"></div><div class="abs" style="left:716.0px;top:215.6px;width:6px;height:1.3px;background:#aaa"></div><div class="abs" style="left:675.0px;top:215.6px;width:1.5px;height:6px;background:#aaa"></div><div class="abs" style="left:725.0px;top:232.6px;width:6px;height:1.6px;background:#888"></div><div class="abs" style="left:730.0px;top:229.6px;width:1.6px;height:3px;background:#888"></div>
<div class="abs" style="left:185px;top:116px;width:40px;height:40px;background:#f5f6fa"></div>
<div class="abs" style="left:598px;top:116px;width:122px;height:40px;background:#67c23a;border-radius:5px;color:#fff;font-size:21px;line-height:40.4px;text-align:center">公司总部</div>
</div>
<div class="card" style="left:396px;top:1096px;width:860px;height:520px">
<div class="ct" style="top:27.7px">系统消息</div><div class="chl" style="top:92px"></div>
<div class="abs th" style="left:31px;top:120px">消息标题</div>
<div class="abs th" style="left:471.500px;width:100px;text-align:center;top:120px">状态</div>
<div class="abs th" style="left:589px;width:120px;text-align:center;top:120px">创建日期</div>
<div class="abs th" style="left:727px;width:100px;text-align:center;top:120px">操作</div>
<div class="abs" style="left:16px;top:171px;width:810px;height:1px;background:#ebeef5"></div>
<div class="abs" style="left:16px;top:234.3px;width:810px;height:1px;background:#ebeef5"></div>
<div class="abs td" style="left:32px;top:183.3px">111</div>
<div class="abs tag tg" style="left:490px;top:185.3px">未读</div>
<div class="abs td" style="left:589px;width:120px;text-align:center;top:183.3px">2024-08-02</div>
<div class="abs btn" style="left:748px;top:186.3px">查看</div>
<div class="abs" style="left:16px;top:297.6px;width:810px;height:1px;background:#ebeef5"></div>
<div class="abs tdc" style="left:32px;top:246.6px">关于企业福利</div>
<div class="abs tag tb" style="left:490px;top:248.6px">已读</div>
<div class="abs td" style="left:589px;width:120px;text-align:center;top:246.6px">2024-07-20</div>
<div class="abs btn" style="left:748px;top:249.6px">查看</div>
<div class="abs" style="left:16px;top:360.9px;width:810px;height:1px;background:#ebeef5"></div>
<div class="abs tdc" style="left:32px;top:309.9px">关于企业福利</div>
<div class="abs tag tg" style="left:490px;top:311.9px">未读</div>
<div class="abs td" style="left:589px;width:120px;text-align:center;top:309.9px">2024-07-20</div>
<div class="abs btn" style="left:748px;top:312.9px">查看</div>
<div class="abs" style="left:16px;top:424.2px;width:810px;height:1px;background:#ebeef5"></div>
<div class="abs tdc" style="left:32px;top:373.2px">关于企业福利</div>
<div class="abs tag tg" style="left:490px;top:375.2px">未读</div>
<div class="abs td" style="left:589px;width:120px;text-align:center;top:373.2px">2024-07-20</div>
<div class="abs btn" style="left:748px;top:376.2px">查看</div>
<div class="abs" style="left:16px;top:487.5px;width:810px;height:1px;background:#ebeef5"></div>
<div class="abs tdc" style="left:32px;top:436.5px">关于企业福利</div>
<div class="abs tag tg" style="left:490px;top:438.5px">未读</div>
<div class="abs td" style="left:589px;width:120px;text-align:center;top:436.5px">2024-07-20</div>
<div class="abs btn" style="left:748px;top:439.5px">查看</div>
<div class="abs" style="left:826px;top:172px;width:16px;height:300px;background:#f5f5f5"></div>
<div class="abs" style="left:826px;top:172px;width:16px;height:162px;background:#bbb;border-radius:8px"></div>
</div>
</div></div>
<div class="abs" style="left:1272px;top:193px;width:1428px;height:1340px;overflow:hidden"><div class="abs" style="left:-1272px;top:-193px;width:0;height:0">
<div class="card" style="left:1272px;top:193px;width:1428px;height:878px">
<div class="ct" style="top:27.7px">收入支出记账</div><div class="chl" style="top:92px"></div>
<div class="abs num" style="left:32.3px;width:316.9px;top:125.0px">16258.05</div>
<div class="abs nlb" style="left:32.3px;width:316.9px;top:175.0px">当月收入/元</div>
<div class="abs" style="left:32.3px;width:316.9px;top:221.0px;height:8px;background:#f9ca24"></div>
<div class="abs num" style="left:381.4px;width:315.4px;top:125.0px">911.23</div>
<div class="abs nlb" style="left:381.4px;width:315.4px;top:175.0px">今日收入/元</div>
<div class="abs" style="left:381.4px;width:315.4px;top:221.0px;height:8px;background:#f0932b"></div>
<div class="abs num" style="left:729.5px;width:316.3px;top:125.0px">1</div>
<div class="abs nlb" style="left:729.5px;width:316.3px;top:175.0px">待审核收入</div>
<div class="abs" style="left:729.5px;width:316.3px;top:221.0px;height:8px;background:#eb4d4b"></div>
<div class="abs num" style="left:1078.0px;width:316.5px;top:125.0px">1</div>
<div class="abs nlb" style="left:1078.0px;width:316.5px;top:175.0px">待结算收入</div>
<div class="abs" style="left:1078.0px;width:316.5px;top:221.0px;height:8px;background:#6ab04c"></div>
<div class="abs num" style="left:32.3px;width:316.9px;top:244.5px">13433.92</div>
<div class="abs nlb" style="left:32.3px;width:316.9px;top:294.5px">当月支出/元</div>
<div class="abs" style="left:32.3px;width:316.9px;top:341.0px;height:8px;background:#409eff"></div>
<div class="abs num" style="left:381.4px;width:315.4px;top:244.5px">420.73</div>
<div class="abs nlb" style="left:381.4px;width:315.4px;top:294.5px">今日支出/元</div>
<div class="abs" style="left:381.4px;width:315.4px;top:341.0px;height:8px;background:#22a6b3"></div>
<div class="abs num" style="left:729.5px;width:316.3px;top:244.5px">1</div>
<div class="abs nlb" style="left:729.5px;width:316.3px;top:294.5px">待审核支出</div>
<div class="abs" style="left:729.5px;width:316.3px;top:341.0px;height:8px;background:#be2edd"></div>
<div class="abs num" style="left:1078.0px;width:316.5px;top:244.5px">2</div>
<div class="abs nlb" style="left:1078.0px;width:316.5px;top:294.5px">待结算支出</div>
<div class="abs" style="left:1078.0px;width:316.5px;top:341.0px;height:8px;background:#4834d4"></div>
<div class="abs cht" style="left:23.2px;top:379.79999999999995px">最近7天现金流统计</div>
<svg class="abs" style="left:17px;top:376px" width="1400" height="490" viewBox="1290 570 1400 490" font-family="Liberation Sans,Noto Sans CJK SC,sans-serif"><path d="M2308 592H2347" stroke="#5470c6" stroke-width="3"/><circle cx="2327.5" cy="592" r="8.2" fill="#fff" stroke="#5470c6" stroke-width="3"/><text x="2356" y="599" font-size="19.6" fill="#333">收入金额</text><path d="M2448.4 592H2488" stroke="#91cc75" stroke-width="3"/><circle cx="2468.2" cy="592" r="8.2" fill="#fff" stroke="#91cc75" stroke-width="3"/><text x="2496.6" y="599" font-size="19.6" fill="#333">支出金额</text><path d="M2589.4 592H2628.4" stroke="#fac858" stroke-width="3"/><circle cx="2608.9" cy="592" r="8.2" fill="#fff" stroke="#fac858" stroke-width="3"/><text x="2637.5" y="599" font-size="19.6" fill="#333">利润</text><path d="M1420.8 661.8H2683.3" stroke="#e0e6f1" stroke-width="1.6"/><text x="1407.8" y="666.1" font-size="19.200" fill="#6e7079" text-anchor="end">1,200</text><path d="M1420.8 719.8H2683.3" stroke="#e0e6f1" stroke-width="1.6"/><text x="1407.8" y="724.1" font-size="19.200" fill="#6e7079" text-anchor="end">900</text><path d="M1420.8 777.8H2683.3" stroke="#e0e6f1" stroke-width="1.6"/><text x="1407.8" y="782.1" font-size="19.200" fill="#6e7079" text-anchor="end">600</text><path d="M1420.8 835.8H2683.3" stroke="#e0e6f1" stroke-width="1.6"/><text x="1407.8" y="840.1" font-size="19.200" fill="#6e7079" text-anchor="end">300</text><text x="1407.8" y="898.1" font-size="19.200" fill="#6e7079" text-anchor="end">0</text><path d="M1420.8 951.8H2683.3" stroke="#e0e6f1" stroke-width="1.6"/><text x="1407.8" y="956.1" font-size="19.200" fill="#6e7079" text-anchor="end">-300</text><path d="M1420.8 1009.8H2683.3" stroke="#e0e6f1" stroke-width="1.6"/><text x="1407.8" y="1014.1" font-size="19.200" fill="#6e7079" text-anchor="end">-600</text><path d="M1420.8 892.5H2683.3" stroke="#6e7079" stroke-width="1.6"/><path d="M1420.8 892.5V901.0" stroke="#6e7079" stroke-width="1.6"/><path d="M1602.2 892.5V901.0" stroke="#6e7079" stroke-width="1.6"/><path d="M1782.5 892.5V901.0" stroke="#6e7079" stroke-width="1.6"/><path d="M1962.9 892.5V901.0" stroke="#6e7079" stroke-width="1.6"/><path d="M2143.2 892.5V901.0" stroke="#6e7079" stroke-width="1.6"/><path d="M2323.6 892.5V901.0" stroke="#6e7079" stroke-width="1.6"/><path d="M2503.9 892.5V901.0" stroke="#6e7079" stroke-width="1.6"/><text x="1511.0" y="1036" font-size="19.600" fill="#6e7079" text-anchor="middle">10-17</text><text x="1691.3" y="1036" font-size="19.600" fill="#6e7079" text-anchor="middle">10-18</text><text x="1871.7" y="1036" font-size="19.600" fill="#6e7079" text-anchor="middle">10-19</text><text x="2052.1" y="1036" font-size="19.600" fill="#6e7079" text-anchor="middle">10-20</text><text x="2232.4" y="1036" font-size="19.600" fill="#6e7079" text-anchor="middle">10-21</text><text x="2412.8" y="1036" font-size="19.600" fill="#6e7079" text-anchor="middle">10-22</text><text x="2593.1" y="1036" font-size="19.600" fill="#6e7079" text-anchor="middle">10-23</text><path d="M1510.98 758.60C1510.98 758.60 1601.81 705.90 1691.34 705.90C1782.16 705.90 1781.09 767.60 1871.69 767.60C1961.45 767.60 1959.81 711.60 2052.05 711.60C2140.17 711.60 2146.78 711.60 2232.41 716.10C2327.14 721.08 2322.47 801.60 2412.76 801.60C2502.83 801.60 2593.12 717.30 2593.12 717.30" fill="none" stroke="#5470c6" stroke-width="3.2" stroke-linejoin="round"/><path d="M1510.98 854.20C1510.98 854.20 1611.69 854.20 1691.34 848.60C1792.05 841.52 1771.15 708.80 1871.69 708.80C1951.51 708.80 1963.87 708.80 2052.05 725.80C2144.23 743.57 2140.29 763.86 2232.41 783.50C2320.64 802.31 2322.39 795.61 2412.76 802.70C2502.75 809.76 2593.12 811.80 2593.12 811.80" fill="none" stroke="#91cc75" stroke-width="3.2" stroke-linejoin="round"/><path d="M1510.98 797.60C1510.98 797.60 1617.74 750.70 1691.34 750.70C1798.10 750.70 1766.86 952.10 1871.69 952.10C1947.21 952.10 1960.29 910.83 2052.05 878.60C2140.65 847.48 2143.24 825.40 2232.41 825.40C2323.59 825.40 2325.04 892.10 2412.76 892.10C2505.40 892.10 2593.12 798.80 2593.12 798.80" fill="none" stroke="#fac858" stroke-width="3.2" stroke-linejoin="round"/><circle cx="1511.0" cy="758.6" r="3.3" fill="#fff" stroke="#5470c6" stroke-width="2.7"/><circle cx="1691.3" cy="705.9" r="3.3" fill="#fff" stroke="#5470c6" stroke-width="2.7"/><circle cx="1871.7" cy="767.6" r="3.3" fill="#fff" stroke="#5470c6" stroke-width="2.7"/><circle cx="2052.1" cy="711.6" r="3.3" fill="#fff" stroke="#5470c6" stroke-width="2.7"/><circle cx="2232.4" cy="716.1" r="3.3" fill="#fff" stroke="#5470c6" stroke-width="2.7"/><circle cx="2412.8" cy="801.6" r="3.3" fill="#fff" stroke="#5470c6" stroke-width="2.7"/><circle cx="2593.1" cy="717.3" r="3.3" fill="#fff" stroke="#5470c6" stroke-width="2.7"/><circle cx="1511.0" cy="854.2" r="3.3" fill="#fff" stroke="#91cc75" stroke-width="2.7"/><circle cx="1691.3" cy="848.6" r="3.3" fill="#fff" stroke="#91cc75" stroke-width="2.7"/><circle cx="1871.7" cy="708.8" r="3.3" fill="#fff" stroke="#91cc75" stroke-width="2.7"/><circle cx="2052.1" cy="725.8" r="3.3" fill="#fff" stroke="#91cc75" stroke-width="2.7"/><circle cx="2232.4" cy="783.5" r="3.3" fill="#fff" stroke="#91cc75" stroke-width="2.7"/><circle cx="2412.8" cy="802.7" r="3.3" fill="#fff" stroke="#91cc75" stroke-width="2.7"/><circle cx="2593.1" cy="811.8" r="3.3" fill="#fff" stroke="#91cc75" stroke-width="2.7"/><circle cx="1511.0" cy="797.6" r="3.3" fill="#fff" stroke="#fac858" stroke-width="2.7"/><circle cx="1691.3" cy="750.7" r="3.3" fill="#fff" stroke="#fac858" stroke-width="2.7"/><circle cx="1871.7" cy="952.1" r="3.3" fill="#fff" stroke="#fac858" stroke-width="2.7"/><circle cx="2052.1" cy="878.6" r="3.3" fill="#fff" stroke="#fac858" stroke-width="2.7"/><circle cx="2232.4" cy="825.4" r="3.3" fill="#fff" stroke="#fac858" stroke-width="2.7"/><circle cx="2412.8" cy="892.1" r="3.3" fill="#fff" stroke="#fac858" stroke-width="2.7"/><circle cx="2593.1" cy="798.8" r="3.3" fill="#fff" stroke="#fac858" stroke-width="2.7"/></svg>
</div>
<div class="card" style="left:1272px;top:1088px;width:1428px;height:600px">
<div class="ct" style="top:26.7px">销售管理</div><div class="chl" style="top:91px"></div>
<div class="abs num" style="left:32.3px;width:432.9px;top:124.0px">171</div>
<div class="abs nlb" style="left:32.3px;width:432.9px;top:174.0px">全部订单数</div>
<div class="abs" style="left:32.3px;width:432.9px;top:220.2px;height:8px;background:#f9ca24"></div>
<div class="abs num" style="left:497.0px;width:432.3px;top:124.0px">25</div>
<div class="abs nlb" style="left:497.0px;width:432.3px;top:174.0px">本月订单数</div>
<div class="abs" style="left:497.0px;width:432.3px;top:220.2px;height:8px;background:#f0932b"></div>
<div class="abs num" style="left:961.0px;width:433.5px;top:124.0px">1</div>
<div class="abs nlb" style="left:961.0px;width:433.5px;top:174.0px">今日订单数</div>
<div class="abs" style="left:961.0px;width:433.5px;top:220.2px;height:8px;background:#eb4d4b"></div>
<div class="abs num" style="left:32.3px;width:432.9px;top:244.0px">1</div>
<div class="abs nlb" style="left:32.3px;width:432.9px;top:294.0px">待审核订单</div>
<div class="abs" style="left:32.3px;width:432.9px;top:340.2px;height:8px;background:#6ab04c"></div>
<div class="abs num" style="left:497.0px;width:432.3px;top:244.0px">146</div>
<div class="abs nlb" style="left:497.0px;width:432.3px;top:294.0px">待出库订单</div>
<div class="abs" style="left:497.0px;width:432.3px;top:340.2px;height:8px;background:#409eff"></div>
<div class="abs num" style="left:961.0px;width:433.5px;top:244.0px">170</div>
<div class="abs nlb" style="left:961.0px;width:433.5px;top:294.0px">待收款订单</div>
<div class="abs" style="left:961.0px;width:433.5px;top:340.2px;height:8px;background:#22a6b3"></div>
<div class="abs cht" style="left:23.2px;top:379.29999999999995px">最近7天销售出库单统计</div>
<div class="abs" style="left:1278px;top:388px;width:40px;height:24px;border-radius:5px;background:#5470c6"></div>
<div class="abs" style="left:1326px;top:383.29999999999995px;font-size:19.400px;color:#333;line-height:28px;white-space:nowrap">订单数量</div>
</div>
</div></div>
<div class="abs" style="left:2700px;top:193px;width:16px;height:1340px;background:#f5f5f5"></div>
<div class="abs" style="left:2700px;top:193px;width:16px;height:370px;background:#bbb;border-radius:8px"></div>
<div class="abs" style="left:2484px;top:1489px;width:237.4px;height:51px;background:#67c23a;border-radius:25.5px;z-index:9"></div>
<svg class="abs" style="left:2541.6px;top:1503.6px;z-index:10" width="21" height="21" viewBox="0 0 21 21"><path d="M18.03 11.55L20.52 12.88L19.30 15.86L16.59 15.05L15.08 16.57L15.91 19.27L12.93 20.51L11.59 18.02L9.45 18.03L8.12 20.52L5.14 19.30L5.95 16.59L4.43 15.08L1.73 15.91L0.49 12.93L2.98 11.59L2.97 9.45L0.48 8.12L1.70 5.14L4.41 5.95L5.92 4.43L5.09 1.73L8.07 0.49L9.41 2.98L11.55 2.97L12.88 0.48L15.86 1.70L15.05 4.41L16.57 5.92L19.27 5.09L20.51 8.07L18.02 9.41ZM14.10 10.50A3.6 3.6 0 1 0 6.90 10.50A3.6 3.6 0 1 0 14.10 10.50Z" fill="#fff" fill-rule="evenodd"/></svg>
<div class="abs" style="left:2570.3px;top:1494.6px;z-index:10;color:#fff;font-size:21.300px;line-height:40px;white-space:nowrap">体验功能<span style="margin-left:4px">·</span></div>
</div>
</body>
</html>
